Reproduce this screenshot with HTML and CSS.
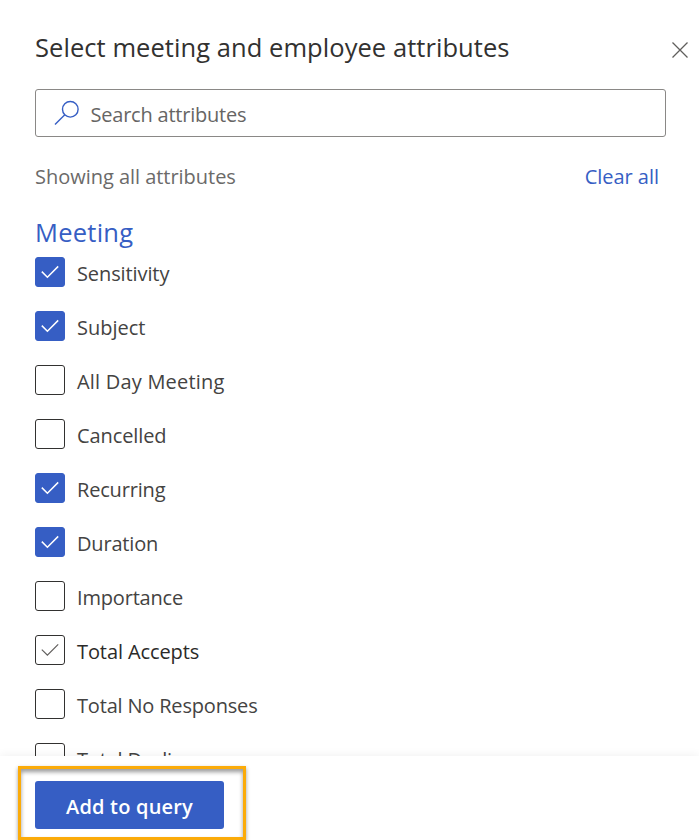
FILE: index.html
```html
<!DOCTYPE html>
<html lang="en">
<head>
<meta charset="utf-8">
<title>Select attributes</title>
<link rel="stylesheet" href="styles.css">
</head>
<body>
<svg class="defs" width="0" height="0"><symbol id="check" viewBox="0 0 30 30"><path d="M6.8 14.6L12.4 20.2L23.2 9.4"/></symbol></svg>
<main class="panel">
  <header class="header">
    <h1>Select meeting and employee attributes</h1>
    <button class="close" aria-label="Close"><svg width="16" height="16" viewBox="0 0 16 16"><path d="M.5 .5L15.5 15.5M15.5 .5L.5 15.5"/></svg></button>
  </header>
  <div class="search">
    <svg width="26" height="26" viewBox="0 0 26 26"><circle cx="16.3" cy="9.3" r="7.8"/><path d="M10.8 14.8L1 24.5"/></svg>
    <span>Search attributes</span>
  </div>
  <div class="status"><span>Showing all attributes</span><a class="clear">Clear all</a></div>
  <section class="list">
    <h2>Meeting</h2>
    <label class="row"><span class="box on"><svg><use href="#check"/></svg></span><span class="label snug">Sensitivity</span></label>
    <label class="row"><span class="box on"><svg><use href="#check"/></svg></span><span class="label">Subject</span></label>
    <label class="row"><span class="box"></span><span class="label loose">All Day Meeting</span></label>
    <label class="row"><span class="box"></span><span class="label snug">Cancelled</span></label>
    <label class="row"><span class="box on"><svg><use href="#check"/></svg></span><span class="label tight">Recurring</span></label>
    <label class="row"><span class="box on"><svg><use href="#check"/></svg></span><span class="label tight">Duration</span></label>
    <label class="row"><span class="box"></span><span class="label tight">Importance</span></label>
    <label class="row"><span class="box hover"><svg><use href="#check"/></svg></span><span class="label snug dark">Total Accepts</span></label>
    <label class="row"><span class="box"></span><span class="label tight">Total No Responses</span></label>
    <label class="row"><span class="box"></span><span class="label tight">Total Declines</span></label>
  </section>
  <footer class="footer">
    <button class="add">Add to query</button>
    <div class="callout"></div>
  </footer>
</main>
</body>
</html>
```
FILE: styles.css
```css
* { box-sizing: border-box; }
body { margin: 0; background: #fff; font-family: "Open Sans", "Noto Sans", sans-serif; font-size: 20px; color: #323130; }
button { font: inherit; border: 0; background: none; padding: 0; }
svg { display: block; fill: none; }
.defs { display: none; }
.panel { width: 699px; height: 840px; overflow: hidden; display: flex; flex-direction: column; }
.header { height: 89px; flex: none; display: flex; justify-content: space-between; padding: 29px 11px 0 35px; }
h1 { margin: 0; font-size: 25.5px; line-height: 36px; font-weight: 400; white-space: nowrap; letter-spacing: .06px; }
.close { height: 16px; margin-top: 13px; }
.close path { stroke: #605e5c; stroke-width: 1.3; }
.search { flex: none; height: 48px; margin: 0 33px 0 35px; border: 1px solid #8a8886; border-radius: 3px; display: flex; align-items: center; padding-left: 18px; gap: 10.5px; color: #666564; }
.search svg { stroke: #365ec4; stroke-width: 1.4; }
.search span { padding-top: 3px; letter-spacing: -.22px; }
.status { flex: none; height: 76px; padding: 24px 40px 0 35px; line-height: 32px; display: flex; justify-content: space-between; color: #6b6a69; letter-spacing: -.03px; }
.clear { color: #365ec4; }
.list { height: 543px; flex: none; overflow: hidden; padding-left: 35px; }
h2 { margin: 0; height: 44px; line-height: 38px; font-size: 25.5px; font-weight: 400; letter-spacing: .25px; color: #365ec4; }
.row { display: flex; height: 54px; align-items: flex-start; gap: 12px; }
.box { width: 30px; height: 30px; border: 1px solid #323130; border-radius: 3px; flex: none; }
.box svg { width: 30px; height: 30px; margin: -1px; stroke-width: 1.5; }
.on { background: #365ec4; border-color: #365ec4; stroke: #fff; }
.hover { stroke: #605e5c; }
.hover svg { stroke-width: 1.2; }
.label { line-height: 34px; color: #444342; white-space: nowrap; }
.snug { letter-spacing: -.1px; }
.tight { letter-spacing: -.18px; }
.loose { letter-spacing: .2px; }
.dark { color: #2b2a29; }
.footer { position: relative; flex: none; height: 84px; padding: 25px 35px 0; background: #fff; box-shadow: 0 0 10px rgba(0,0,0,.07); }
.add { display: block; width: 189px; height: 48px; border-radius: 3px; background: #365ec4; color: #fff; font-weight: 600; letter-spacing: .2px; padding-top: 2px; }
.callout { position: absolute; left: 18px; top: 10px; width: 228px; height: 74px; border: 3px solid #fbab09; box-shadow: 0 2px 4px rgba(0,0,0,.4), inset 0 3px 4px rgba(0,0,0,.4); }
```
